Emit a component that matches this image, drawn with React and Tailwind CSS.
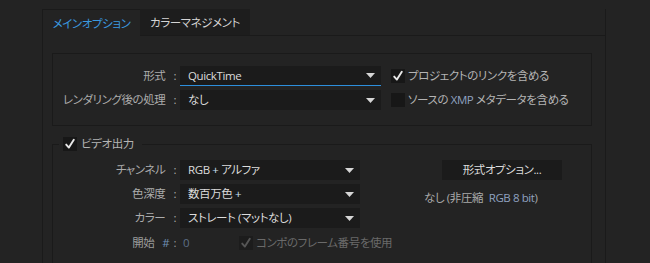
import React from 'react';

const Arrow = () => (
  <svg width="9" height="5" viewBox="0 0 9 5" className="shrink-0">
    <polygon points="0,0 9,0 4.5,5" fill="#d6d6d6" />
  </svg>
);

const Check = ({ checked, dim }) => (
  <span className={`w-[14px] h-[14px] shrink-0 flex items-center justify-center ${dim ? 'bg-[#1c1c1c]' : 'bg-[#171717]'}`}>
    {checked && (
      <svg width="14" height="14" viewBox="0 0 14 14">
        <path d="M3.2 7.6 L5.9 10.6 L10.8 2.8" fill="none" stroke={dim ? '#555' : '#e8e8e8'} strokeWidth="1.9" strokeLinecap="round" strokeLinejoin="round" />
      </svg>
    )}
  </span>
);

const Label = ({ children }) => (
  <div className="w-[127px] shrink-0 flex justify-end pr-[4px] text-[#acacac]">
    <span>{children}</span>
    <span className="ml-[8px]">:</span>
  </div>
);

const Dropdown = ({ value, width, active }) => (
  <div
    className={`${width} h-[20px] shrink-0 bg-[#1b1b1b] flex items-center justify-between pl-[8px] pr-[6px] text-[#dcdcdc] ${
      active ? 'border-b border-[#2d8fdd]' : ''
    }`}
  >
    <span>{value}</span>
    <Arrow />
  </div>
);

export default function App() {
  return (
    <div className="w-[650px] h-[263px] overflow-hidden bg-[#232323] pt-[9px] pl-[42px] text-[11.5px] leading-[16px] tracking-[-0.4px] font-['Open_Sans','Noto_Sans_CJK_JP',sans-serif] [font-feature-settings:'palt']">
      {/* tabs */}
      <div className="flex w-[564px] h-[27px]">
        <div className="w-[98px] border-l border-t border-[#1a1a1a] flex items-center justify-center pt-[1px] text-[#3b9ae0]">
          メインオプション
        </div>
        <div className="w-[110px] bg-[#1d1d1d] border-b border-[#1a1a1a] flex items-center justify-center pt-[1px] text-[#d4d4d4]">
          カラーマネジメント
        </div>
        <div className="flex-1 border-b border-r border-[#1a1a1a]" />
      </div>

      {/* panel */}
      <div className="w-[564px] h-[240px] border-l border-r border-[#1a1a1a] pt-[17px] pl-[9px]">
        {/* format box */}
        <div className="w-[540px] h-[73px] border border-[#1a1a1a] pt-[12px]">
          <div className="flex items-center h-[20px]">
            <Label>形式</Label>
            <Dropdown value="QuickTime" width="w-[201px]" active />
            <div className="ml-[10px] flex items-center text-[#b4b4b4]">
              <Check checked />
              <span className="ml-[3px]">プロジェクトのリンクを含める</span>
            </div>
          </div>
          <div className="flex items-center h-[20px] mt-[4px]">
            <Label>レンダリング後の処理</Label>
            <Dropdown value="なし" width="w-[201px]" />
            <div className="ml-[10px] flex items-center text-[#b4b4b4]">
              <Check />
              <span className="ml-[3px]">
                ソースの <span className="text-[#8fa2c0]">XMP</span> メタデータを含める
              </span>
            </div>
          </div>
        </div>

        {/* video output group */}
        <fieldset className="w-[540px] mt-[10px] border border-[#1a1a1a] pb-[20px]">
          <legend className="ml-[6px] pl-[4px] pr-[8px]">
            <div className="flex items-center text-[#b4b4b4]">
              <Check checked />
              <span className="ml-[4px]">ビデオ出力</span>
            </div>
          </legend>

          <div className="flex pt-[8px]">
            <div className="flex flex-col gap-[4px]">
              <div className="flex items-center">
                <Label>チャンネル</Label>
                <Dropdown value={<>RGB <span className="text-[#cfe0f5]">+</span> アルファ</>} width="w-[180px]" />
              </div>
              <div className="flex items-center">
                <Label>色深度</Label>
                <Dropdown value={<>数百万色 <span className="text-[#cfe0f5]">+</span></>} width="w-[180px]" />
              </div>
              <div className="flex items-center">
                <Label>カラー</Label>
                <Dropdown value="ストレート (マットなし)" width="w-[180px]" />
              </div>
            </div>

            <div className="ml-[64px] flex flex-col">
              <button className="ml-[18px] w-[120px] h-[20px] bg-[#1b1b1b] text-[#dcdcdc] flex items-center justify-center">
                形式オプション...
              </button>
              <div className="mt-[10px] text-[#a9a9a9]">
                なし (非圧縮 <span className="ml-[3px] text-[#8fa2c0]">RGB 8 bit</span>)
              </div>
            </div>
          </div>

          <div className="flex items-center h-[20px] mt-[5px]">
            <div className="w-[127px] shrink-0 flex justify-end pr-[4px] text-[#9a9a9a]">
              <span>開始</span>
              <span className="ml-[8px] text-[#6f8fb3]">#</span>
              <span className="ml-[4px]">:</span>
            </div>
            <span className="w-[59px] pl-[3px] text-[#5d6f86]">0</span>
            <Check checked dim />
            <span className="ml-[3px] text-[#6a6a6a]">コンポのフレーム番号を使用</span>
          </div>
        </fieldset>
      </div>
    </div>
  );
}
